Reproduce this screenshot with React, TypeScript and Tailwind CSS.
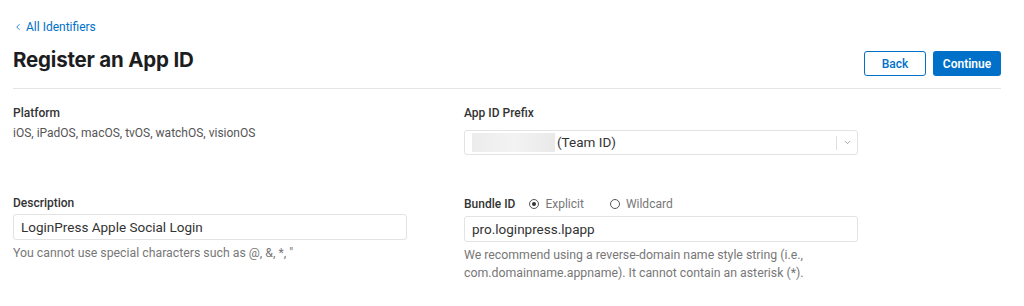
import { ChevronLeft, ChevronDown } from "lucide-react";

function Label({ children }: { children: React.ReactNode }) {
  return <p className="text-[12px] font-medium leading-[16px] text-[#333]">{children}</p>;
}

function Help({ children }: { children: React.ReactNode }) {
  return <p className="mt-[4px] text-[12.3px] leading-[18px] text-[#777]">{children}</p>;
}

function Radio({ label, checked }: { label: string; checked?: boolean }) {
  return (
    <label className="flex items-center gap-[6px] text-[12px] font-normal text-[#777]">
      <span className="flex h-[10px] w-[10px] items-center justify-center rounded-full border border-[#555]">
        {checked && <span className="h-[4px] w-[4px] rounded-full bg-[#333]" />}
      </span>
      {label}
    </label>
  );
}

export default function App() {
  return (
    <div className="h-[306px] w-[1024px] bg-white pl-[13px] pr-[23px] font-['Roboto','Liberation_Sans',sans-serif] text-[#333]">
      <div className="pt-[19px]">
        <a href="#" className="flex items-center gap-[3px] text-[12px] leading-[16px] text-[#0070c9]">
          <ChevronLeft size={10} strokeWidth={2} />
          All Identifiers
        </a>
      </div>
      <header className="mt-[12px] flex items-end justify-between border-b border-[#e5e5e5] pb-[12px]">
        <h1 className="pb-[3px] font-['Inter','Liberation_Sans',sans-serif] text-[20.5px] font-bold leading-[26px] tracking-[-0.2px] text-[#1d1d1f]">
          Register an App ID
        </h1>
        <div className="flex gap-[7px]">
          <button className="h-[25px] w-[62px] rounded-[3px] border border-[#0070c9] bg-white text-[12px] font-medium text-[#0070c9]">
            Back
          </button>
          <button className="h-[25px] w-[68px] rounded-[3px] bg-[#0070c9] text-[12px] font-semibold text-white">
            Continue
          </button>
        </div>
      </header>

      <div className="grid grid-cols-[451px_1fr] pt-[16px]">
        <div>
          <Label>Platform</Label>
          <p className="mt-[4px] text-[12px] leading-[16px] text-[#555]">
            iOS, iPadOS, macOS, tvOS, watchOS, visionOS
          </p>
        </div>
        <div>
          <Label>App ID Prefix</Label>
          <div className="mt-[9px] flex h-[25px] w-[394px] items-center rounded-[3px] border border-[#e3e3e3] bg-white pl-[7px]">
            <span className="h-[19px] w-[83px] bg-gradient-to-r from-[#ececec] via-[#f3f3f3] to-[#e9e9e9]" />
            <span className="ml-[2px] text-[13.5px] text-[#333]">(Team ID)</span>
            <span className="ml-auto h-[14px] w-px bg-[#e0e0e0]" />
            <span className="flex w-[20px] justify-center text-[#888]">
              <ChevronDown size={9} strokeWidth={2} />
            </span>
          </div>
        </div>
      </div>

      <div className="mt-[40px] grid grid-cols-[451px_1fr]">
        <div>
          <Label>Description</Label>
          <div className="mt-[3px] flex h-[26px] w-[394px] items-center rounded-[3px] border border-[#e3e3e3] px-[7px] text-[13.5px] text-[#333]">
            LoginPress Apple Social Login
          </div>
          <Help>You cannot use special characters such as @, &amp;, *, "</Help>
        </div>
        <div>
          <div className="flex items-center">
            <Label>Bundle ID</Label>
            <div className="ml-[14px] flex gap-[26px]">
              <Radio label="Explicit" checked />
              <Radio label="Wildcard" />
            </div>
          </div>
          <div className="mt-[3px] flex h-[26px] w-[394px] items-center rounded-[3px] border border-[#e3e3e3] px-[7px] text-[13.5px] text-[#333]">
            pro.loginpress.lpapp
          </div>
          <Help>
            We recommend using a reverse-domain name style string (i.e.,
            <br />
            com.domainname.appname). It cannot contain an asterisk (*).
          </Help>
        </div>
      </div>
    </div>
  );
}
